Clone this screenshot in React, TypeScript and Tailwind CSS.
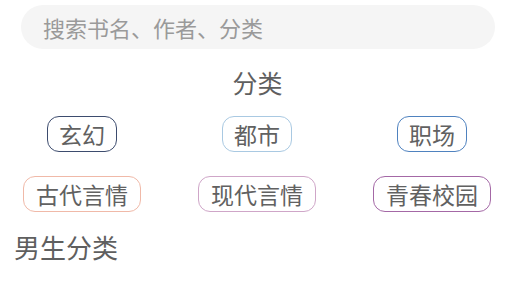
const tags = [
  { name: "玄幻", border: "border-[#3d4c6e]", w: "w-[70px]" },
  { name: "都市", border: "border-[#a9c9e2]", w: "w-[70px]" },
  { name: "职场", border: "border-[#4f82bf]", w: "w-[70px]" },
  { name: "古代言情", border: "border-[#f0b9a8]", w: "w-[118px]" },
  { name: "现代言情", border: "border-[#cfa6c8]", w: "w-[118px]" },
  { name: "青春校园", border: "border-[#a468a6]", w: "w-[118px]" },
];

export default function App() {
  return (
    <div className="w-[519px] h-[282px] bg-white overflow-hidden font-['Noto_Sans_CJK_SC',sans-serif] text-[#666]">
      {/* search */}
      <div className="pt-[5px] pl-[21px] pr-[24px]">
        <div className="h-[44px] rounded-full bg-[#f5f5f5] flex items-center pl-[22px]">
          <input
            className="w-full bg-transparent outline-none text-[22px] text-[#999] placeholder:text-[#9a9a9a]"
            placeholder="搜索书名、作者、分类"
          />
        </div>
      </div>

      <h2 className="mt-[17px] text-center text-[25px] leading-[32px] pr-[4px] text-[#5f5f5f]">分类</h2>

      <div className="mt-[18px] pl-[12px] grid grid-cols-[repeat(3,140px)] gap-x-[35px] gap-y-[24px] justify-items-center">
        {tags.map((t) => (
          <div
            key={t.name}
            className={`${t.w} h-[36px] rounded-[12px] border-[1.5px] ${t.border} flex items-center justify-center text-[23px] leading-none text-[#616161]`}
          >
            {t.name}
          </div>
        ))}
      </div>

      <h3 className="mt-[18px] pl-[14px] text-[26px] leading-[34px] text-[#5f5f5f]">男生分类</h3>
    </div>
  );
}
